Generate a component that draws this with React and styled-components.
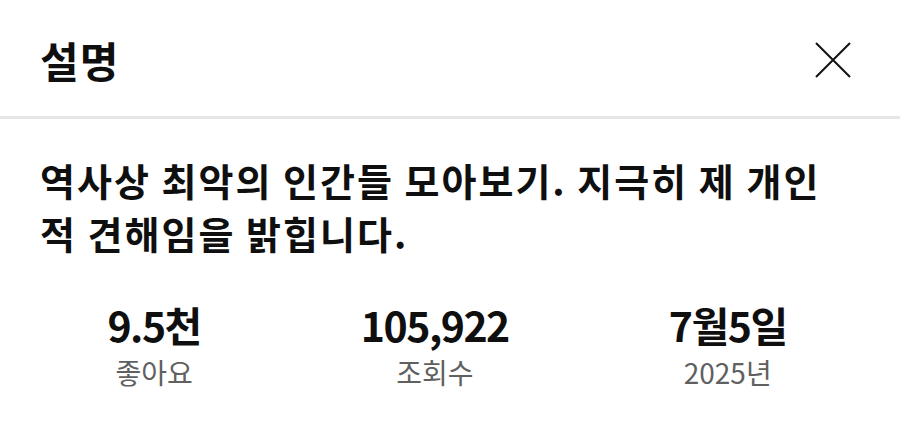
import React from 'react';
import styled, { createGlobalStyle } from 'styled-components';

const GlobalStyle = createGlobalStyle`
  html, body {
    margin: 0;
    padding: 0;
    background: #ffffff;
  }
  body {
    font-family: "Noto Sans CJK KR", "Noto Sans", sans-serif;
    color: #0f0f0f;
  }
`;

const Sheet = styled.div`
  width: 900px;
  height: 424px;
  background: #fff;
  overflow: hidden;
`;

const Header = styled.div`
  display: flex;
  align-items: center;
  justify-content: space-between;
  height: 119px;
  padding: 4px 48px 0 40px;
  box-sizing: border-box;
  border-bottom: 3px solid #e6e6e6;
`;

const Title = styled.h1`
  margin: 0;
  font-size: 42px;
  font-weight: 700;
  letter-spacing: 1px;
  line-height: 1;
`;

const CloseButton = styled.button`
  display: flex;
  align-items: center;
  justify-content: center;
  padding: 0;
  border: none;
  background: none;
  width: 38px;
  height: 38px;
  cursor: pointer;
`;

const Body = styled.div`
  padding: 34px 40px 0;
`;

const Description = styled.p`
  margin: 0;
  max-width: 790px;
  font-size: 38px;
  font-weight: 700;
  line-height: 53px;
  letter-spacing: 2px;
`;

const Stats = styled.div`
  display: flex;
  justify-content: center;
  gap: 160px;
  margin-top: 42px;
  padding-right: 6px;
`;

const Stat = styled.div`
  display: flex;
  flex-direction: column;
  align-items: center;
`;

const Value = styled.div`
  font-size: 41px;
  font-weight: 700;
  letter-spacing: -1.5px;
  line-height: 46px;
`;

const Label = styled.div`
  font-size: 28px;
  color: #606060;
  line-height: 36px;
  margin-top: 7px;
`;

const stats = [
  { value: '9.5천', label: '좋아요' },
  { value: '105,922', label: '조회수' },
  { value: '7월5일', label: '2025년' },
];

export default function App() {
  return (
    <Sheet>
      <GlobalStyle />
      <Header>
        <Title>설명</Title>
        <CloseButton aria-label="닫기">
          <svg width="38" height="38" viewBox="0 0 38 38">
            <path d="M2 2 L36 36 M36 2 L2 36" stroke="#111" strokeWidth="2" fill="none" />
          </svg>
        </CloseButton>
      </Header>
      <Body>
        <Description>역사상 최악의 인간들 모아보기. 지극히 제 개인적 견해임을 밝힙니다.</Description>
        <Stats>
          {stats.map((s) => (
            <Stat key={s.label}>
              <Value>{s.value}</Value>
              <Label>{s.label}</Label>
            </Stat>
          ))}
        </Stats>
      </Body>
    </Sheet>
  );
}
